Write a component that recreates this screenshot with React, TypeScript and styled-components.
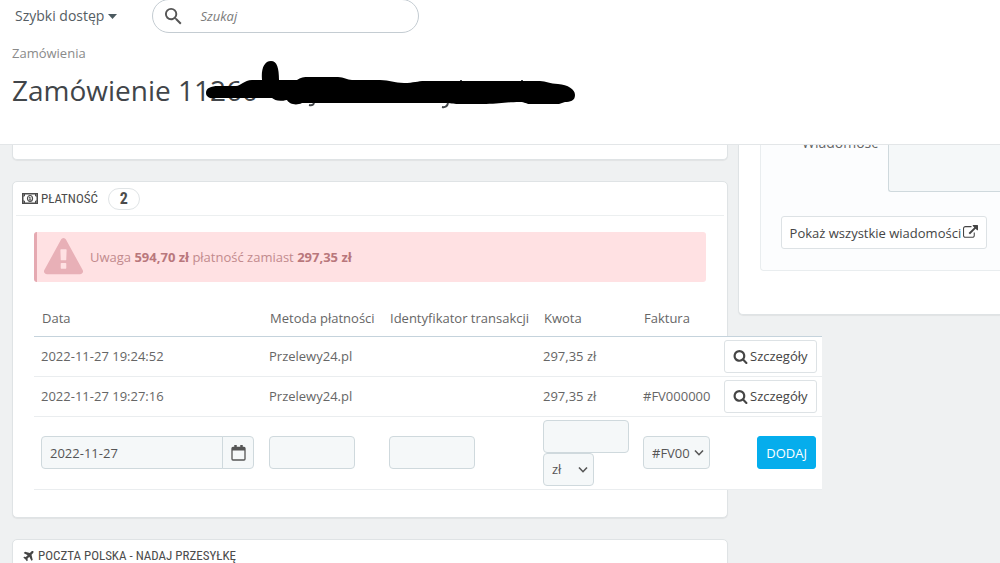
import React from 'react';
import styled, { createGlobalStyle } from 'styled-components';

const GlobalStyle = createGlobalStyle`
  *, *::before, *::after { box-sizing: border-box; }
  html, body { margin: 0; background: #eff1f2; }
  body {
    font-family: "Open Sans", "Noto Sans", sans-serif;
    font-size: 13px;
    line-height: 18px;
    color: #666;
  }
  button, input, select, textarea { font: inherit; color: inherit; margin: 0; }
`;

const Page = styled.div`
  display: flex;
  flex-direction: column;
  height: 100vh;
  overflow: hidden;
`;

const Header = styled.header`
  flex: none;
  height: 144px;
  background: #fff;
  padding-left: 12px;
`;

const TopBar = styled.div`
  display: flex;
  align-items: center;
  gap: 35px;
  height: 32px;
`;

const QuickAccess = styled.button`
  display: flex;
  align-items: center;
  gap: 4px;
  padding: 0 0 0 3px;
  border: 0;
  background: none;
  color: #555d63;
  font-size: 14px;
`;

const Search = styled.form`
  display: flex;
  align-items: center;
  gap: 18px;
  width: 267px;
  height: 34px;
  padding: 0 11px;
  border: 1px solid #c4ccd2;
  border-radius: 18px;
  background: #fff;
`;

const SearchInput = styled.input`
  flex: 1;
  min-width: 0;
  padding: 0;
  border: 0;
  outline: 0;
  background: none;
  font-size: 13px;
  font-style: italic;
  &::placeholder { color: #7b7b7b; opacity: 1; }
`;

const Breadcrumb = styled.a`
  display: block;
  margin-top: 12px;
  color: #8a8a8a;
  text-decoration: none;
`;

const Title = styled.h1`
  position: relative;
  width: max-content;
  margin: 9px 0 0;
  font-size: 28px;
  line-height: 38px;
  font-weight: 400;
  color: #414549;
`;

const Scribble = styled.svg`
  position: absolute;
  left: 193px;
  top: -11px;
`;

const Content = styled.main`
  flex: 1;
  min-height: 0;
  overflow: hidden;
  display: grid;
  grid-template-columns: minmax(0, 30fr) minmax(0, 11fr);
  gap: 10px;
  align-items: start;
  padding-left: 12px;
  border-top: 1px solid #e3e6e8;
`;

const Column = styled.div`
  display: flex;
  flex-direction: column;
  gap: 21px;
`;

const Panel = styled.section<{ $cut?: boolean }>`
  padding: 0 21px 27px;
  border: 1px solid #dfe3e5;
  border-top-width: ${p => (p.$cut ? 0 : 1)}px;
  border-radius: ${p => (p.$cut ? '0 0 5px 5px' : '5px')};
  background: #fff;
  box-shadow: 0 1px 1px rgba(0, 0, 0, 0.06);
`;

const PreviousPanel = styled(Panel)`
  height: 15px;
  padding: 0;
`;

const PanelHeading = styled.h2`
  display: flex;
  align-items: center;
  gap: 3px;
  height: 34px;
  margin: 0 -18px;
  padding: 0 6px;
  border-bottom: 1px solid #eceff0;
  font-family: "Ubuntu Condensed", "Roboto Condensed", "Open Sans Condensed", Roboto, sans-serif;
  font-size: 13px;
  font-weight: 400;
  color: #4c4c4c;
`;

const Count = styled.span`
  margin-left: 7px;
  padding: 0 11px;
  border: 1px solid #e0e4e6;
  border-radius: 11px;
  font-size: 16px;
  line-height: 20px;
  font-weight: 700;
`;

const Alert = styled.div`
  display: flex;
  align-items: center;
  gap: 7px;
  height: 50px;
  margin-top: 16px;
  padding-left: 7px;
  border-left: 3px solid #e5a9b1;
  border-radius: 3px;
  background: #ffe1e3;
  color: #c28a8d;
  b { color: #b9777c; }
`;

const Table = styled.table`
  width: 788px;
  margin-top: 18px;
  border-collapse: collapse;
  table-layout: fixed;
  tbody { background: #fff; }
`;

const Th = styled.th<{ $w: number }>`
  width: ${p => p.$w}px;
  height: 36px;
  padding: 0 8px;
  border-bottom: 1px solid #c5d3dc;
  text-align: left;
  font-weight: 400;
  white-space: nowrap;
`;

const Td = styled.td<{ $right?: boolean }>`
  height: 40px;
  padding: 3px 6px 3px 7px;
  border-bottom: 1px solid #eaedef;
  text-align: ${p => (p.$right ? 'right' : 'left')};
  font-size: 13px;
  white-space: nowrap;
`;

const Field = styled.input<{ $w: number }>`
  display: block;
  width: ${p => p.$w}px;
  height: 33px;
  padding: 0 8px;
  border: 1px solid #cfd9dd;
  border-radius: 4px;
  background: #f5f8f9;
  color: #555;
`;

const DateGroup = styled.div`
  display: flex;
  ${Field} { border-radius: 4px 0 0 4px; }
`;

const DateButton = styled.button`
  display: grid;
  place-items: center;
  width: 32px;
  height: 33px;
  margin-left: -1px;
  padding: 0;
  border: 1px solid #cfd9dd;
  border-radius: 0 4px 4px 0;
  background: #f5f8f9;
`;

const SelectBox = styled.div<{ $w: number }>`
  position: relative;
  width: ${p => p.$w}px;
  select {
    appearance: none;
    display: block;
    width: 100%;
    height: 33px;
    padding: 0 18px 0 8px;
    border: 1px solid #cfd9dd;
    border-radius: 4px;
    background: #f5f8f9;
    color: #555;
  }
  svg {
    position: absolute;
    right: 6px;
    top: 13px;
    pointer-events: none;
  }
`;

const Button = styled.button`
  display: inline-flex;
  align-items: center;
  gap: 2px;
  height: 33px;
  padding: 0 8px;
  border: 1px solid #dde2e5;
  border-radius: 3px;
  background: #fff;
  color: #454545;
  vertical-align: top;
  white-space: nowrap;
`;

const PrimaryButton = styled(Button)`
  border-color: #00aff0;
  background: #06adec;
  color: #fff;
`;

const MessagePanel = styled(Panel)`
  padding: 0 0 43px 21px;
  border-right: 0;
  border-radius: 0 0 0 5px;
`;

const MessageBox = styled.div`
  padding: 0 0 21px 20px;
  border: solid #e9edef;
  border-width: 0 0 1px 1px;
  border-radius: 0 0 0 4px;
  background: #fcfdfe;
`;

const MessageRow = styled.div`
  display: flex;
  justify-content: flex-end;
  gap: 10px;
  margin-bottom: 24px;
  label {
    margin-top: -11px;
    font-size: 14px;
  }
  textarea {
    flex: none;
    width: 112px;
    height: 47px;
    border: solid #cfd9dd;
    border-width: 0 0 1px 1px;
    border-radius: 0 0 0 3px;
    background: #f5f8f9;
    resize: none;
  }
`;

const paths = {
  search:
    'M1216 832q0-185-131.5-316.5t-316.5-131.5-316.5 131.5-131.5 316.5 131.5 316.5 316.5 131.5 316.5-131.5 131.5-316.5zm512 832q0 52-38 90t-90 38q-54 0-90-38l-343-342q-179 124-399 124-143 0-273.5-55.5t-225-150-150-225-55.5-273.5 55.5-273.5 150-225 225-150 273.5-55.5 273.5 55.5 225 150 150 225 55.5 273.5q0 220-124 399l343 343q37 37 37 90z',
  plane:
    'M1568 160q44 52 12 148t-108 172l-161 161 160 696q5 19-12 33l-128 96q-7 6-19 6-4 0-7-1-15-3-21-16l-279-508-259 259 53 194q5 17-8 31l-96 96q-9 9-23 9h-2q-15-2-24-13l-189-252-252-189q-11-7-13-23-1-13 9-25l96-97q9-9 23-9 6 0 8 1l194 53 259-259-508-279q-14-8-17-24-2-16 9-27l128-128q14-13 30-8l665 159 160-160q76-76 172-108t148 12z',
  warning:
    'M1024 1375v-190q0-14-9.5-23.5t-22.5-9.5h-192q-13 0-22.5 9.5t-9.5 23.5v190q0 14 9.5 23.5t22.5 9.5h192q13 0 22.5-9.5t9.5-23.5zm-2-374l18-459q0-12-10-19-13-11-24-11h-220q-11 0-24 11-10 7-10 21l17 457q0 10 10 16.5t24 6.5h185q14 0 23.5-6.5t10.5-16.5zm-14-934l768 1408q35 63-2 126-17 29-46.5 46t-63.5 17h-1536q-34 0-63.5-17t-46.5-46q-37-63-2-126l768-1408q17-31 47-49t65-18 65 18 47 49z',
  external:
    'M1408 928v320q0 119-84.5 203.5t-203.5 84.5h-832q-119 0-203.5-84.5t-84.5-203.5v-832q0-119 84.5-203.5t203.5-84.5h704q14 0 23 9t9 23v64q0 14-9 23t-23 9h-704q-66 0-113 47t-47 113v832q0 66 47 113t113 47h832q66 0 113-47t47-113v-320q0-14 9-23t23-9h64q14 0 23 9t9 23zm384-864v512q0 26-19 45t-45 19-45-19l-176-176-652 652q-10 10-23 10t-23-10l-114-114q-10-10-10-23t10-23l652-652-176-176q-19-19-19-45t19-45 45-19h512q26 0 45 19t19 45z',
};

const Icon = ({ name, size, color = '#454545' }: { name: keyof typeof paths; size: number; color?: string }) => (
  <svg width={size} height={size} viewBox="0 0 1792 1792" fill={color} aria-hidden="true">
    <path d={paths[name]} />
  </svg>
);

const Chevron = () => (
  <svg width="10" height="8" viewBox="0 0 10 8" fill="none" stroke="#555" strokeWidth="1.600" aria-hidden="true">
    <path d="M1 1.5 5 5.7 9 1.5" />
  </svg>
);

const payments = [
  { date: '2022-11-27 19:24:52', method: 'Przelewy24.pl', amount: '297,35 zł', invoice: '' },
  { date: '2022-11-27 19:27:16', method: 'Przelewy24.pl', amount: '297,35 zł', invoice: '#FV000000' },
];

export default function App() {
  return (
    <Page>
      <GlobalStyle />
      <Header>
        <TopBar>
          <QuickAccess type="button">
            Szybki dostęp
            <svg width="9" height="5" viewBox="0 0 9 5" fill="#4c5a60" aria-hidden="true">
              <path d="M0 0h9L4.500 5z" />
            </svg>
          </QuickAccess>
          <Search onSubmit={e => e.preventDefault()}>
            <svg width="18" height="18" viewBox="2 2 19 19" fill="#555" aria-hidden="true">
              <path d="M15.500 14h-.79l-.28-.27A6.470 6.470 0 0 0 16 9.500 6.500 6.500 0 1 0 9.500 16c1.610 0 3.090-.59 4.230-1.570l.27.28v.79l5 4.990L20.490 19l-4.990-5zm-6 0C7.010 14 5 11.990 5 9.500S7.010 5 9.500 5 14 7.010 14 9.500 11.990 14 9.500 14z" />
            </svg>
            <SearchInput type="text" placeholder="Szukaj" aria-label="Szukaj" />
          </Search>
        </TopBar>
        <Breadcrumb href="#orders">Zamówienia</Breadcrumb>
        <Title>
          Zamówienie 11260
          <Scribble width="372" height="50" viewBox="205 60 372 50" aria-hidden="true">
            <path d="M206 93C206 88 211 86 218 86H236C241 86 244 80 252 80H262C261 69 264 61 271 61C277 61 279 68 279 80H297C302 76 308 77 316 77H338C344 77 347 80 352 80H380C390 80 394 83 404 83C414 83 417 81 425 81H540C546 81 550 84 558 84C568 85 575 89 575 95C575 101 570 102 565 102L559 104H530C526 104 525 102 520 102C505 102 500 104 486 104H458C453 104 451 103 444 103H302C296 106 289 104 287 100C278 102 275 100 272 98H216C210 99 206 97 206 93Z" fill="#000" />
            <path d="M314 103q-1 3-5 2M448 103q-1 5-6 4M461 81v-1M522 81v-1" fill="none" stroke="#414549" strokeWidth="2" />
          </Scribble>
        </Title>
      </Header>
      <Content>
        <Column>
          <PreviousPanel $cut />
          <Panel>
            <PanelHeading>
              <svg width="16" height="11" viewBox="0 0 16 11" fill="none" stroke="#4c4c4c" aria-hidden="true">
                <path d="M.75.75h14.500v9.500H.75z" strokeWidth="1.500" />
                <ellipse cx="8" cy="5.500" rx="2.500" ry="3" strokeWidth="1.200" />
                <path d="M7 4.500 8 4v3M7 7h2" />
                <path d="M1 3h1.500V1M13.500 1v2H15M1 8h1.500v2M13.500 10V8H15" />
              </svg>
              PŁATNOŚĆ
              <Count>2</Count>
            </PanelHeading>
            <Alert role="alert">
              <Icon name="warning" size={39} color="#e8b0b7" />
              <span>
                Uwaga <b>594,70 zł</b> płatność zamiast <b>297,35 zł</b>
              </span>
            </Alert>
            <Table>
              <thead>
                <tr>
                  <Th $w={228}>Data</Th>
                  <Th $w={120}>Metoda płatności</Th>
                  <Th $w={154}>Identyfikator transakcji</Th>
                  <Th $w={100}>Kwota</Th>
                  <Th $w={81}>Faktura</Th>
                  <Th $w={105} aria-label="Akcje" />
                </tr>
              </thead>
              <tbody>
                {payments.map(p => (
                  <tr key={p.date}>
                    <Td>{p.date}</Td>
                    <Td>{p.method}</Td>
                    <Td />
                    <Td>{p.amount}</Td>
                    <Td>{p.invoice}</Td>
                    <Td $right>
                      <Button type="button">
                        <Icon name="search" size={15} />
                        Szczegóły
                      </Button>
                    </Td>
                  </tr>
                ))}
                <tr>
                  <Td>
                    <DateGroup>
                      <Field $w={182} type="text" defaultValue="2022-11-27" aria-label="Data" />
                      <DateButton type="button" aria-label="Kalendarz">
                        <svg width="15" height="16" viewBox="0 0 15 16" fill="none" stroke="#555" aria-hidden="true">
                          <rect x="1" y="2.500" width="13" height="12.500" rx="1" strokeWidth="1.300" />
                          <path d="M1 4h13" strokeWidth="3" />
                          <path d="M4.500 0v4M10.500 0v4" strokeWidth="2.500" />
                        </svg>
                      </DateButton>
                    </DateGroup>
                  </Td>
                  <Td><Field $w={86} type="text" aria-label="Metoda płatności" /></Td>
                  <Td><Field $w={86} type="text" aria-label="Identyfikator transakcji" /></Td>
                  <Td>
                    <Field $w={86} type="text" aria-label="Kwota" />
                    <SelectBox $w={51}>
                      <select aria-label="Waluta"><option>zł</option></select>
                      <Chevron />
                    </SelectBox>
                  </Td>
                  <Td>
                    <SelectBox $w={67}>
                      <select aria-label="Faktura"><option>#FV00</option></select>
                      <Chevron />
                    </SelectBox>
                  </Td>
                  <Td $right><PrimaryButton type="button">DODAJ</PrimaryButton></Td>
                </tr>
              </tbody>
            </Table>
          </Panel>
          <Panel>
            <PanelHeading>
              <Icon name="plane" size={13} />
              POCZTA POLSKA - NADAJ PRZESYŁKĘ
            </PanelHeading>
          </Panel>
        </Column>
        <MessagePanel $cut>
          <MessageBox>
            <MessageRow>
              <label htmlFor="message">Wiadomość</label>
              <textarea id="message" />
            </MessageRow>
            <Button type="button">
              Pokaż wszystkie wiadomości
              <Icon name="external" size={15} />
            </Button>
          </MessageBox>
        </MessagePanel>
      </Content>
    </Page>
  );
}
